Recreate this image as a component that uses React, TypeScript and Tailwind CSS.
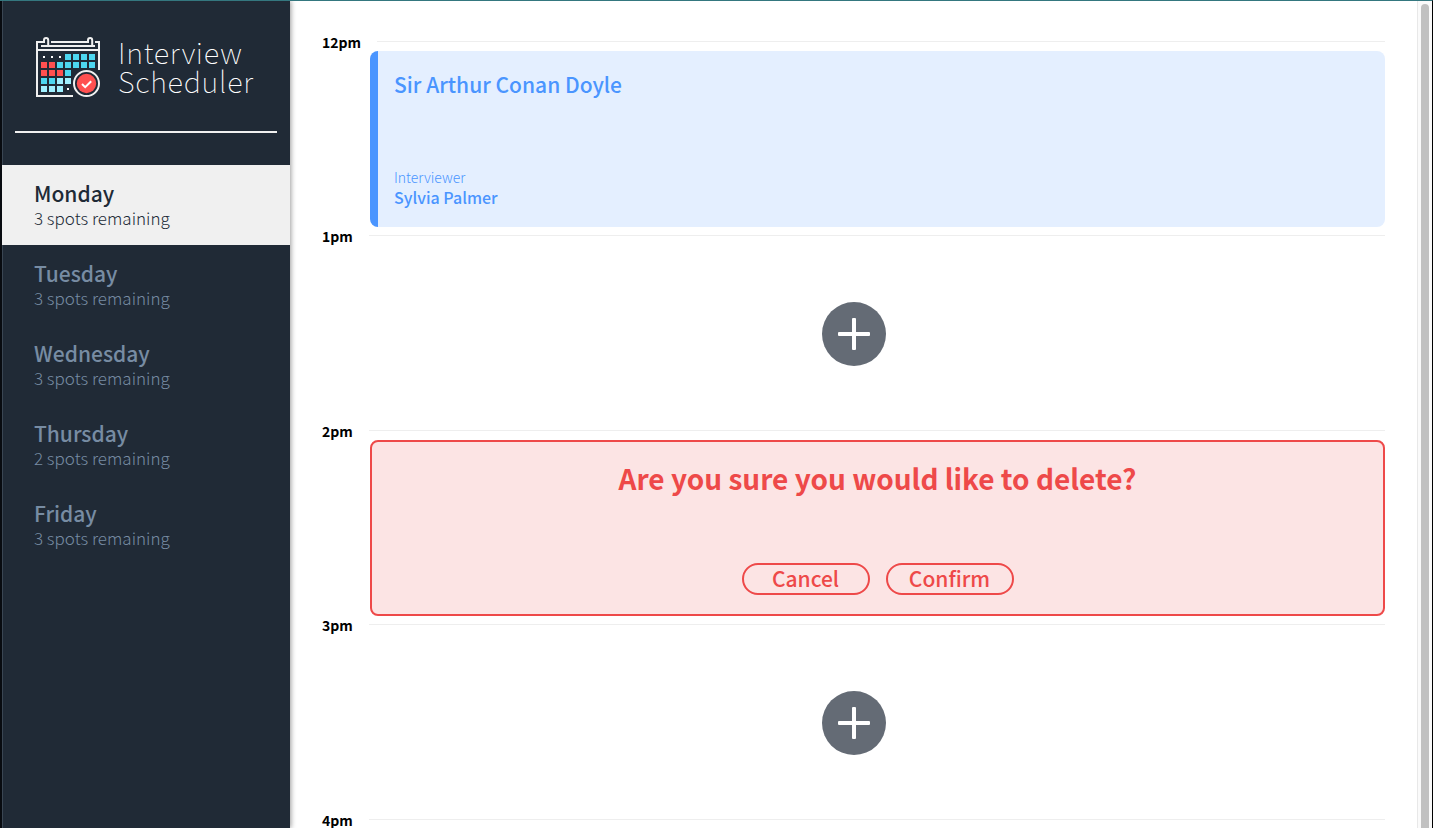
import type { ReactNode } from "react";

const days = [
  { name: "Monday", spots: 3, selected: true },
  { name: "Tuesday", spots: 3, selected: false },
  { name: "Wednesday", spots: 3, selected: false },
  { name: "Thursday", spots: 2, selected: false },
  { name: "Friday", spots: 3, selected: false },
];

const CYAN = "#4dd7f0";
const RED = "#ff5050";
const PALE = "#a0f0ff";

const cells: (string | null)[][] = [
  [null, null, null, CYAN, CYAN, CYAN, CYAN],
  [RED, RED, CYAN, CYAN, CYAN, CYAN, CYAN],
  [RED, RED, RED, CYAN],
  [CYAN, CYAN, PALE, PALE],
  [PALE, PALE, PALE, null],
];

function CalendarLogo() {
  return (
    <svg width="64" height="60" viewBox="0 0 64 60" fill="none" overflow="visible" aria-hidden="true">
      <g fill="#f0f0f0" shapeRendering="crispEdges">
        <rect x="0" y="4" width="8" height="2" />
        <rect x="15" y="4" width="37" height="2" />
        <rect x="59" y="4" width="5" height="2" />
        <rect x="0" y="4" width="2" height="56" />
        <rect x="62" y="4" width="2" height="29" />
        <rect x="0" y="58" width="37" height="2" />
        <rect x="0" y="12" width="64" height="2" />
        <rect x="5" y="8" width="54" height="2" />
      </g>
      <path d="M8 6V3.2a2.1 2.1 0 0 1 4.2 0V9M52 6V3.2a2.1 2.1 0 0 1 4.2 0V9" stroke="#f0f0f0" strokeWidth="2" />
      <g shapeRendering="crispEdges">
        {cells.map((row, r) =>
          row.map((color, c) =>
            color ? (
              <rect key={`${r}-${c}`} x={5 + c * 8} y={17 + r * 8} width="6" height="6" fill={color} />
            ) : (
              <rect key={`${r}-${c}`} x={7 + c * 8} y={19 + r * 8} width="2" height="2" fill="#fff" />
            ),
          )
        )}
      </g>
      <circle cx="50.5" cy="46.5" r="12.5" fill="#202a36" stroke="#f0f0f0" strokeWidth="2" />
      <circle cx="50.5" cy="46.5" r="9.7" fill="#ff5050" />
      <path d="M46 47l3.2 3.2 6-6" stroke="#fff" strokeWidth="2" />
    </svg>
  );
}

function Hour({ label, children }: { label: string; children?: ReactNode }) {
  return (
    <section>
      <header className="flex h-[18px] items-start">
        <h4 className="text-sm leading-[18px] font-bold text-black">{label}</h4>
        <hr className="mt-2 ml-4 flex-1 border-[#eeeeee]" />
      </header>
      {children}
    </section>
  );
}

function AddButton() {
  return (
    <div className="flex h-[177px] items-center justify-center">
      <button
        type="button"
        aria-label="Add appointment"
        className="flex size-16 items-center justify-center rounded-full bg-[#646b75]"
      >
        <svg width="32" height="32" viewBox="0 0 32 32" fill="#fff" aria-hidden="true">
          <rect x="0" y="14" width="32" height="4" rx="1" />
          <rect x="14" y="0" width="4" height="32" rx="1" />
        </svg>
      </button>
    </div>
  );
}

const pill =
  "flex h-8 w-32 items-center justify-center rounded-full border-2 border-[#ee4949] pb-0.5 text-[21px] leading-7 font-medium";

export default function App() {
  return (
    <div className="flex h-screen overflow-hidden border-t border-r border-t-[#34777f] border-r-black bg-white font-['Noto_Sans_CJK_JP','Noto_Sans_CJK_SC',sans-serif]">
      <aside className="z-10 flex w-[290px] shrink-0 flex-col border-l-2 border-l-[#080b10] bg-[#202a36] shadow-[1px_0_5px_rgba(0,0,0,0.4),inset_1px_0_0_#3a4653]">
        <div className="mx-[13px] flex h-[132px] items-center gap-[18px] border-b-2 border-[#f0f0f0] pt-0.5 pl-[21px]">
          <CalendarLogo />
          <p className="pb-0.5 text-[29px] leading-[29px] font-thin tracking-wide text-white">
            Interview
            <br />
            Scheduler
          </p>
        </div>
        <nav className="mt-8">
          <ul>
            {days.map((day) => (
              <li key={day.name}>
                <a
                  href="#"
                  className={
                    day.selected
                      ? "flex h-20 flex-col justify-center bg-[#f0f0f0] pb-0.5 pl-8 text-[#202a36]"
                      : "flex h-20 flex-col justify-center pb-0.5 pl-8 text-[#778ca3]"
                  }
                >
                  <span className="text-[21px] leading-7 font-medium">{day.name}</span>
                  <span className="text-[17px] leading-[22px] font-light">{day.spots} spots remaining</span>
                </a>
              </li>
            ))}
          </ul>
        </nav>
      </aside>

      <main className="min-w-0 flex-1 overflow-hidden px-8 pt-8">
        <Hour label="12pm">
          <article className="ml-12 flex h-44 flex-col justify-between rounded-lg border-l-8 border-[#4a95ff] bg-[#e4efff] px-4 py-5 text-[#4a95ff]">
            <h2 className="text-[21px] leading-[26px] font-medium">Sir Arthur Conan Doyle</h2>
            <div>
              <h4 className="text-sm leading-5 font-light">Interviewer</h4>
              <h3 className="text-base leading-5 font-medium">Sylvia Palmer</h3>
            </div>
          </article>
        </Hour>
        <Hour label="1pm">
          <AddButton />
        </Hour>
        <Hour label="2pm">
          <article className="ml-12 flex h-44 flex-col items-center justify-between rounded-lg border-2 border-[#ee4949] bg-[#fce4e4] pt-4 pb-[19px] text-[#ee4949]">
            <h1 className="text-[28px] leading-10 font-bold">Are you sure you would like to delete?</h1>
            <div className="flex gap-4">
              <button type="button" className={pill}>Cancel</button>
              <button type="button" className={pill}>Confirm</button>
            </div>
          </article>
        </Hour>
        <Hour label="3pm">
          <AddButton />
        </Hour>
        <Hour label="4pm" />
      </main>

      <div aria-hidden="true" className="flex w-[15px] shrink-0 justify-center border-l border-[#e8e8e8] bg-[#fafafa] pt-[3px]">
        <div className="w-2 rounded-t-full bg-[#c1c1c1]" />
      </div>
    </div>
  );
}
